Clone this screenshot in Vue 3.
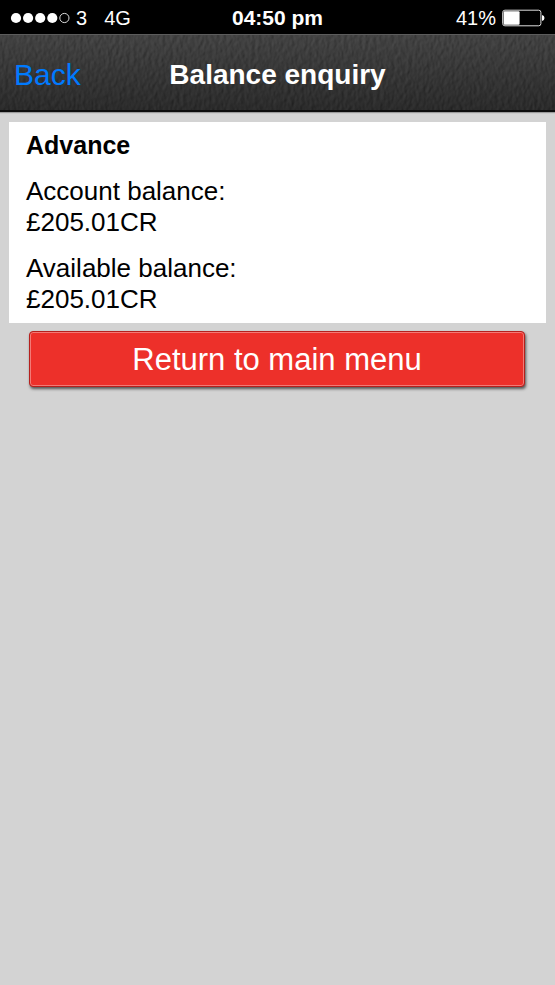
<script setup>
import { ref } from 'vue'

const carrier = '3'
const network = '4G'
const clock = '04:50 pm'
const battery = 41
const signal = [true, true, true, true, false]

const account = ref({
  name: 'Advance',
  balances: [
    { label: 'Account balance:', amount: '£205.01CR' },
    { label: 'Available balance:', amount: '£205.01CR' },
  ],
})
</script>

<template>
  <div class="screen">
    <div class="status">
      <div class="status-left">
        <svg class="dots" width="60" height="12" viewBox="0 0 60 12" aria-hidden="true">
          <circle
            v-for="(on, i) in signal"
            :key="i"
            :cx="6 + i * 12.1"
            cy="6"
            :r="on ? 5.1 : 4.6"
            :fill="on ? '#fff' : 'none'"
            :stroke="on ? 'none' : '#ddd'"
            stroke-width="1"
          />
        </svg>
        <span>{{ carrier }}</span>
        <span class="network">{{ network }}</span>
      </div>
      <div class="clock">{{ clock }}</div>
      <div class="status-right">
        <span>{{ battery }}%</span>
        <svg width="43" height="18" viewBox="0 0 43 18" aria-hidden="true">
          <rect x="0.7" y="1.2" width="38.2" height="15.6" rx="2.2" fill="none" stroke="#ddd" stroke-width="1" />
          <rect x="1.6" y="2.2" :width="battery * 0.39" height="13.6" rx="1" fill="#fff" />
          <path d="M40 6 Q42.5 6.5 42.5 9 Q42.5 11.5 40 12 Z" fill="#fff" />
        </svg>
      </div>
    </div>

    <header class="bar">
      <svg class="leather" width="100%" height="100%" aria-hidden="true">
        <defs>
          <filter id="leather" x="0" y="0" width="100%" height="100%" color-interpolation-filters="sRGB">
            <feTurbulence type="fractalNoise" baseFrequency="0.28 0.17" numOctaves="2" seed="7" result="noise" />
            <feDiffuseLighting in="noise" surfaceScale="0.6" diffuseConstant="0.28" lighting-color="#fff">
              <feDistantLight azimuth="200" elevation="50" />
            </feDiffuseLighting>
          </filter>
        </defs>
        <rect width="100%" height="100%" filter="url(#leather)" />
      </svg>
      <a class="back" href="#">Back</a>
      <h1>Balance enquiry</h1>
    </header>

    <main>
      <section class="card">
        <h2>{{ account.name }}</h2>
        <dl v-for="item in account.balances" :key="item.label">
          <dt>{{ item.label }}</dt>
          <dd>{{ item.amount }}</dd>
        </dl>
      </section>
      <button type="button" class="primary">Return to main menu</button>
    </main>
  </div>
</template>

<style>
body {
  background: #d3d3d3;
}
</style>

<style scoped>
.screen {
  min-height: 100vh;
  background: #d3d3d3;
  color: #000;
  font-family: "Liberation Sans", Arial, sans-serif;
}

.status {
  display: grid;
  grid-template-columns: 1fr auto 1fr;
  align-items: center;
  box-sizing: border-box;
  height: 34px;
  padding: 2px 10px 0;
  background: #000;
  color: #fff;
  font-size: 20px;
  line-height: 32px;
}

.status-left,
.status-right {
  display: flex;
  align-items: center;
  gap: 6px;
}

.network {
  margin-left: 11px;
}

.status-right {
  justify-content: flex-end;
}

.clock {
  font-size: 21px;
  font-weight: 700;
}

.bar {
  position: relative;
  display: grid;
  grid-template-columns: 1fr auto 1fr;
  align-items: center;
  box-sizing: border-box;
  height: 78px;
  padding: 4px 14px 0;
  border-top: 1px solid #5c5c5c;
  border-bottom: 2px solid #0c0c0c;
  background: #303030;
  box-shadow: 0 1px 1px #999;
}

.leather {
  position: absolute;
  inset: 0;
}

.bar::after {
  content: "";
  position: absolute;
  inset: 0;
  background: linear-gradient(rgba(255, 255, 255, 0.06), rgba(0, 0, 0, 0.22));
}

.back,
h1 {
  position: relative;
  z-index: 1;
  line-height: 36px;
}

.back {
  justify-self: start;
  color: #007aff;
  font-size: 30px;
  text-decoration: none;
}

h1 {
  margin: 0;
  color: #fff;
  font-size: 28px;
  font-weight: 700;
}

main {
  padding: 10px 9px;
}

.card {
  padding: 8px 17px;
  background: #fff;
  font-size: 26px;
  line-height: 31px;
}

h2 {
  margin: 0;
  font-size: 25px;
  font-weight: 700;
  line-height: 31px;
}

dl {
  margin: 15px 0 0;
}

dd {
  margin: 0;
}

.primary {
  display: block;
  width: calc(100% - 41px);
  height: 56px;
  margin: 8px 21px 0 20px;
  padding: 2px 0 0;
  border: 1px solid #b5201d;
  border-radius: 4px;
  background: #ed302a;
  box-shadow: inset 0 0 0 1px #f37a76, 1px 2px 3px rgba(0, 0, 0, 0.6);
  color: #fff;
  font-family: inherit;
  font-size: 31px;
  line-height: 36px;
}
</style>
